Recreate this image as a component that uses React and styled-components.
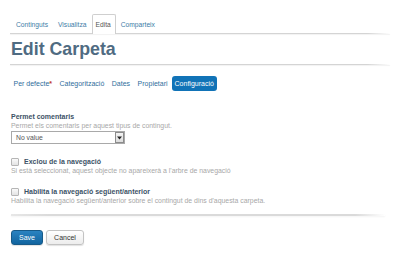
import React from "react";
import styled, { createGlobalStyle } from "styled-components";

const Global = createGlobalStyle`
  html, body {
    margin: 0;
    padding: 0;
    background: #fff;
    font-family: "Liberation Sans", Arial, sans-serif;
  }
`;

const Page = styled.div`
  width: 400px;
  height: 263px;
  box-sizing: border-box;
  padding: 14px 10px 0 10px;
`;

const Rule = styled.div`
  height: 1px;
  background: linear-gradient(to right, #d4d4d4 0%, #d4d4d4 94%, rgba(212, 212, 212, 0) 100%);
  box-shadow: 0 1px 1px rgba(0, 0, 0, 0.06);
`;

const TopTabs = styled.div`
  display: flex;
  height: 19px;
  align-items: stretch;
  padding-left: 1px;
`;

const TopTab = styled.div`
  display: flex;
  align-items: center;
  padding: 0 4px 0 ${props => (props.active ? 3 : 4)}px;
  font-size: 6.7px;
  color: ${props => (props.active ? "#555" : "#3d7ca6")};
  background: #fff;
  border: 1px solid ${props => (props.active ? "#cfcfcf" : "transparent")};
  border-bottom: none;
  border-radius: 2px 2px 0 0;
  margin-bottom: ${props => (props.active ? -1 : 0)}px;
  position: relative;
  z-index: 1;
`;

const Heading = styled.h1`
  margin: 0;
  height: 29px;
  display: flex;
  align-items: center;
  padding: 1px 0 0 1px;
  font-size: 17.8px;
  font-weight: bold;
  color: #4f6b82;
`;

const SubTabs = styled.div`
  display: flex;
  align-items: center;
  margin-top: 10px;
  height: 16px;
`;

const SubTab = styled.div`
  display: flex;
  align-items: center;
  height: 15px;
  padding: 0 ${props => (props.active ? 3 : 3.5)}px;
  margin-right: ${props => (props.active ? 0 : 0.5)}px;
  font-size: 7px;
  border-radius: 3px;
  color: ${props => (props.active ? "#fff" : "#2f6e9c")};
  background: ${props => (props.active ? "#1173b7" : "transparent")};
`;

const Star = styled.span`
  color: #c0392b;
  font-weight: bold;
`;

const Form = styled.div`
  padding: 21px 0 0 1px;
  display: flex;
  flex-direction: column;
`;

const Field = styled.div`
  display: flex;
  flex-direction: column;
  margin-bottom: ${props => props.gap || 0}px;
`;

const Label = styled.div`
  font-size: 7px;
  font-weight: bold;
  color: #3c5266;
  line-height: 9px;
`;

const Help = styled.div`
  font-size: 6.9px;
  color: #a8a8a8;
  line-height: 9px;
`;

const Select = styled.div`
  margin-top: 1px;
  width: 114px;
  height: 13px;
  box-sizing: border-box;
  border: 1px solid #a9a9a9;
  background: #fff;
  display: flex;
  align-items: center;
  justify-content: space-between;
  padding-left: 4px;
  font-size: 6.8px;
  color: #555;
`;

const Arrow = styled.div`
  width: 9px;
  height: 11px;
  box-sizing: border-box;
  border: 1px solid #8c8c8c;
  background: linear-gradient(#f4f4f4, #dcdcdc);
  display: flex;
  align-items: center;
  justify-content: center;
`;

const CheckRow = styled.div`
  display: flex;
  align-items: center;
  gap: 5px;
  height: 9px;
`;

const Box = styled.div`
  width: 8px;
  height: 8px;
  box-sizing: border-box;
  border: 1px solid #b5b5b5;
  background: linear-gradient(#fafafa, #e3e3e3);
  border-radius: 1px;
`;

const Shadow = styled.div`
  margin-top: 9px;
  height: 2px;
  margin-right: 5px;
  background: linear-gradient(to right, rgba(215, 215, 215, 0.6) 0%, #dadada 10%, #dadada 92%, rgba(218, 218, 218, 0) 100%);
  box-shadow: 0 1px 2px rgba(0, 0, 0, 0.05);
`;

const Buttons = styled.div`
  display: flex;
  gap: 3px;
  margin-top: 14px;
`;

const Button = styled.button`
  height: 15px;
  width: ${props => props.width}px;
  padding: 0;
  box-sizing: border-box;
  font-family: "Liberation Sans", Arial, sans-serif;
  font-size: 7px;
  border-radius: 3px;
  border: 1px solid ${props => (props.primary ? "#175a88" : "#c3c3c3")};
  color: ${props => (props.primary ? "#fff" : "#333")};
  background: ${props =>
    props.primary
      ? "linear-gradient(#2a83c1, #11649f)"
      : "linear-gradient(#ffffff, #ececec)"};
  box-shadow: 0 1px 1px rgba(0, 0, 0, 0.12);
`;

export default function App() {
  return (
    <Page>
      <Global />
      <TopTabs>
        <TopTab>Continguts</TopTab>
        <TopTab>Visualitza</TopTab>
        <TopTab active>Edita</TopTab>
        <TopTab>Comparteix</TopTab>
      </TopTabs>
      <Rule />
      <Heading>Edit Carpeta</Heading>
      <Rule />
      <SubTabs>
        <SubTab>
          Per defecte<Star>*</Star>
        </SubTab>
        <SubTab>Categorització</SubTab>
        <SubTab>Dates</SubTab>
        <SubTab>Propietari</SubTab>
        <SubTab active>Configuració</SubTab>
      </SubTabs>
      <Form>
        <Field gap={13}>
          <Label>Permet comentaris</Label>
          <Help>Permet els comentaris per aquest tipus de contingut.</Help>
          <Select>
            No value
            <Arrow>
              <svg width="5" height="4" viewBox="0 0 5 4">
                <path d="M0 0.5 L5 0.5 L2.5 3.5 Z" fill="#222" />
              </svg>
            </Arrow>
          </Select>
        </Field>
        <Field gap={12}>
          <CheckRow>
            <Box />
            <Label>Exclou de la navegació</Label>
          </CheckRow>
          <Help>Si està seleccionat, aquest objecte no apareixerà a l'arbre de navegació</Help>
        </Field>
        <Field>
          <CheckRow>
            <Box />
            <Label>Habilita la navegació següent/anterior</Label>
          </CheckRow>
          <Help>Habilita la navegació següent/anterior sobre el contingut de dins d'aquesta carpeta.</Help>
        </Field>
        <Shadow />
        <Buttons>
          <Button primary width={32}>Save</Button>
          <Button width={38}>Cancel</Button>
        </Buttons>
      </Form>
    </Page>
  );
}
